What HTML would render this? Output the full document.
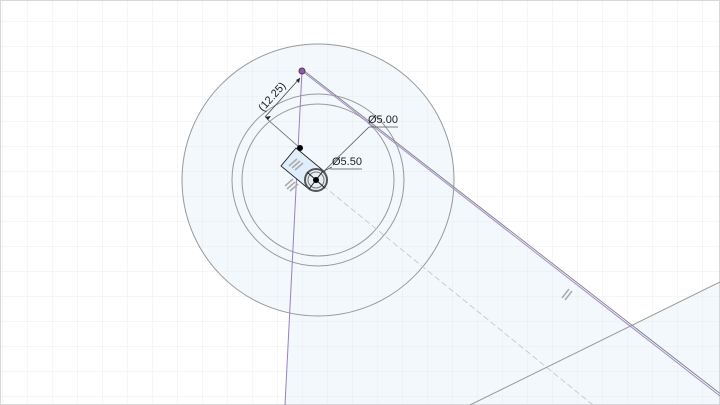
<!DOCTYPE html>
<html><head><style>html,body{margin:0;padding:0;background:#fff}svg{display:block}</style></head><body>
<svg width="720" height="405" viewBox="0 0 720 405" xmlns="http://www.w3.org/2000/svg" font-family="Liberation Sans, sans-serif">
<defs>
<pattern id="g" x="3" y="-3" width="25" height="25" patternUnits="userSpaceOnUse">
<path d="M25 0V25M0 25H25" stroke="#ececec" stroke-width="1" fill="none"/>
</pattern>
</defs>
<rect width="720" height="405" fill="#fff"/>
<path d="M302 71 L720 395 L720 405 L285 405 Z" fill="#f2f8fc"/>
<circle cx="318" cy="180" r="136" fill="#f2f8fc"/>
<path d="M470 405 L720 282 L720 405 Z" fill="#f2f8fc"/>
<rect width="720" height="405" fill="url(#g)"/>
<rect x="0.5" y="0.5" width="719" height="404" fill="none" stroke="#d8d8d8"/>
<circle cx="318" cy="180" r="136" fill="none" stroke="#999"/>
<circle cx="318" cy="180" r="86" fill="none" stroke="#999"/>
<circle cx="318" cy="180" r="76" fill="none" stroke="#999"/>
<line x1="316" y1="180" x2="593" y2="405" stroke="#ccc" stroke-dasharray="6 3"/>
<line x1="470" y1="405" x2="720" y2="282" stroke="#999"/>
<line x1="303" y1="70" x2="720" y2="393.5" stroke="#888"/>
<line x1="302" y1="71" x2="720" y2="396" stroke="#a58bd0"/>
<line x1="302" y1="71" x2="285" y2="405" stroke="#9a7fc0"/>
<circle cx="302" cy="71" r="3" fill="#8a5fb8" stroke="#634"/>
<line x1="265" y1="117" x2="300" y2="78" stroke="#444" stroke-width="0.8"/>
<line x1="267" y1="119" x2="300" y2="148" stroke="#666" stroke-width="0.8"/>
<path d="M265 117 l6 -1 l-3 4 Z M300 78 l-1 5 l-3 -3Z" fill="#222"/>
<text x="0" y="0" font-size="11" fill="#222" transform="translate(263,112) rotate(-48)">(12.25)</text>
<line x1="317" y1="178" x2="369" y2="127" stroke="#555" stroke-width="0.8"/>
<line x1="369" y1="127" x2="398" y2="127" stroke="#555" stroke-width="0.8"/>
<text x="368" y="123" font-size="11" fill="#222">Ø5.00</text>
<line x1="322" y1="172" x2="332" y2="167" stroke="#555" stroke-width="0.8"/>
<line x1="330" y1="169" x2="362" y2="169" stroke="#555" stroke-width="0.8"/>
<text x="332" y="165" font-size="11" fill="#222">Ø5.50</text>
<path d="M296 148 L325 172 L310 190 L281 166 Z" fill="#dfeefa" stroke="#222" stroke-width="0.9"/>
<circle cx="316" cy="180" r="11" fill="#e6eef4" stroke="#555" stroke-width="2"/>
<circle cx="316" cy="180" r="8" fill="none" stroke="#777" stroke-width="1"/>
<path d="M307 172 L325 188 M309 189 L323 171" stroke="#222" stroke-width="1"/>
<circle cx="316" cy="180" r="3" fill="#000"/>
<circle cx="300" cy="148" r="3" fill="#000"/>
<g stroke="#aaa" stroke-width="1.5">
<path d="M289 166 l8 -7 M292 168 l8 -7 M295 170 l8 -7"/>
<path d="M285 186 l8 -7 M287 189 l8 -7 M290 191 l8 -7"/>
<path d="M562 298 l7 -9 M565 300 l7 -9"/>
</g>
</svg>
</body></html>
